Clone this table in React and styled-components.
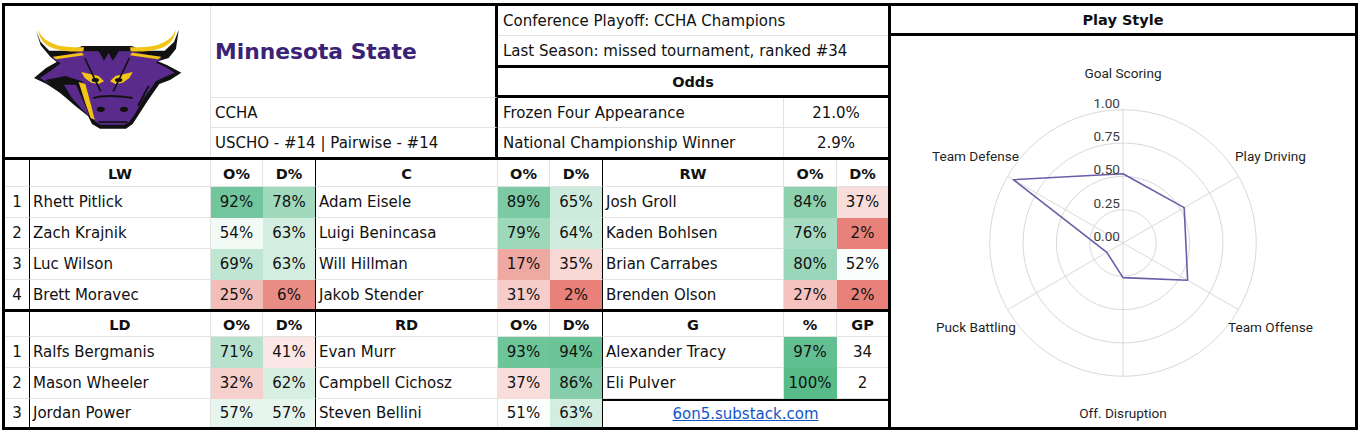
import React from 'react';
import styled, { createGlobalStyle } from 'styled-components';

const GlobalStyle = createGlobalStyle`
  html, body {
    margin: 0;
    padding: 0;
    background: #fff;
  }
  body {
    font-family: "DejaVu Sans", "Open Sans", sans-serif;
    color: #111;
  }
  * {
    box-sizing: border-box;
  }
`;

const GRID = '#e2e2e2';
const COLS = '25px 181px 52px 53px 182px 52px 53px 181px 53px 51px';
const PURPLE = '#5a2b8c';
const GOLD = '#f3c316';

// sheets style colour scale: red -> white -> green
const heat = (v) => {
  if (v === undefined) return '#fff';
  const lerp = (a, b, t) => Math.round(a + (b - a) * t);
  const [c, t] = v >= 50 ? [[87, 187, 138], (v - 50) / 50] : [[230, 124, 115], (50 - v) / 50];
  return `rgb(${lerp(255, c[0], t)}, ${lerp(255, c[1], t)}, ${lerp(255, c[2], t)})`;
};

const Page = styled.div`
  padding: 3px 0 0 2px;
`;

const Frame = styled.div`
  display: flex;
  width: fit-content;
  border: 3px solid #000;
`;

const Sheet = styled.div`
  display: flex;
  flex-direction: column;
  width: 883px;
`;

const Section = styled.div`
  display: grid;
  grid-template-columns: ${COLS};
  grid-template-rows: ${(p) => p.$rows};
  border-bottom: ${(p) => (p.$last ? 'none' : '3px solid #000')};
`;

const Cell = styled.div`
  display: flex;
  align-items: center;
  min-width: 0;
  overflow: hidden;
  white-space: nowrap;
  font-size: 15px;
  border-right: 1px solid ${(p) => (p.$sep ? '#000' : GRID)};
  border-bottom: 1px solid ${GRID};
  ${(p) => p.$end && 'border-right: none;'}
  ${(p) => p.$bottom && 'border-bottom: none;'}
`;

const RankCell = styled(Cell)`
  justify-content: center;
`;

const NameCell = styled(Cell)`
  padding-left: 3px;
`;

const HeadCell = styled(Cell)`
  justify-content: center;
  font-weight: bold;
  font-size: 14.5px;
  padding-top: 2px;
`;

const PctCell = styled(Cell)`
  justify-content: center;
  background: ${(p) => heat(p.$v)};
  ${(p) => p.$v !== undefined && `border-bottom-color: transparent;`}
  ${(p) => p.$v !== undefined && !p.$sep && `border-right-color: transparent;`}
`;

const LinkCell = styled(Cell)`
  grid-column: 8 / 11;
  justify-content: center;
  border-top: 2px solid #000;
  border-right: none;
  border-bottom: none;

  a {
    color: #1155cc;
    text-decoration: underline;
  }
`;

/* top block */
const LogoCell = styled(Cell)`
  grid-column: 1 / 3;
  grid-row: 1 / 6;
  justify-content: center;
  padding: 1px 1px 0 0;
  border-bottom: none;
`;

const TeamName = styled(Cell)`
  grid-column: 3 / 6;
  grid-row: 1 / 4;
  padding: 0 0 1px 4px;
  border-right: 3px solid #000;
  font-size: 21.8px;
  font-weight: bold;
  color: #3a2276;
`;

const InfoCell = styled(Cell)`
  grid-column: 3 / 6;
  grid-row: ${(p) => p.$row};
  padding-left: 4px;
  border-right: 3px solid #000;
`;

const NoteCell = styled(Cell)`
  grid-column: 6 / 11;
  grid-row: ${(p) => p.$row};
  padding-left: 5px;
  border-right: none;
  ${(p) => p.$thick && 'border-bottom: 3px solid #000;'}
`;

const OddsHead = styled(Cell)`
  grid-column: 6 / 11;
  grid-row: 3;
  justify-content: center;
  font-weight: bold;
  font-size: 14.5px;
  border-right: none;
  border-bottom: 3px solid #000;
`;

const OddsLabel = styled(Cell)`
  grid-column: 6 / 9;
  grid-row: ${(p) => p.$row};
  padding-left: 5px;
`;

const OddsValue = styled(Cell)`
  grid-column: 9 / 11;
  grid-row: ${(p) => p.$row};
  justify-content: center;
  border-right: none;
`;

/* play style panel */
const Panel = styled.div`
  width: 467px;
  border-left: 3px solid #000;
  display: flex;
  flex-direction: column;
`;

const PanelHead = styled.div`
  height: 30px;
  border-bottom: 3px solid #000;
  display: flex;
  align-items: center;
  justify-content: center;
  font-weight: bold;
  font-size: 14.5px;
  padding-top: 1px;
`;

const PanelBody = styled.div`
  flex: 1;
  svg {
    display: block;
  }
`;

const AxisLabel = styled.text`
  font-family: Roboto, "Noto Sans", sans-serif;
  font-size: 13.6px;
  fill: #1f1f1f;
`;

const TickLabel = styled(AxisLabel)`
  fill: #3c3c3c;
`;

const forwards = [
  { n: 1, lw: ['Rhett Pitlick', 92, 78], c: ['Adam Eisele', 89, 65], rw: ['Josh Groll', 84, 37] },
  { n: 2, lw: ['Zach Krajnik', 54, 63], c: ['Luigi Benincasa', 79, 64], rw: ['Kaden Bohlsen', 76, 2] },
  { n: 3, lw: ['Luc Wilson', 69, 63], c: ['Will Hillman', 17, 35], rw: ['Brian Carrabes', 80, 52] },
  { n: 4, lw: ['Brett Moravec', 25, 6], c: ['Jakob Stender', 31, 2], rw: ['Brenden Olson', 27, 2] },
];

const defense = [
  { n: 1, ld: ['Ralfs Bergmanis', 71, 41], rd: ['Evan Murr', 93, 94], g: ['Alexander Tracy', 97, 34] },
  { n: 2, ld: ['Mason Wheeler', 32, 62], rd: ['Campbell Cichosz', 37, 86], g: ['Eli Pulver', 100, 2] },
  { n: 3, ld: ['Jordan Power', 57, 57], rd: ['Steven Bellini', 51, 63] },
];

const CX = 1123;
const CY = 243;
const R = 133.3;

const axes = [
  { name: 'Goal Scoring', v: 0.52, x: 1123, y: 78, anchor: 'middle' },
  { name: 'Play Driving', v: 0.53, x: 1235, y: 161, anchor: 'start' },
  { name: 'Team Offense', v: 0.56, x: 1228, y: 332, anchor: 'start' },
  { name: 'Off. Disruption', v: 0.26, x: 1123, y: 418, anchor: 'middle' },
  { name: 'Puck Battling', v: 0.14, x: 1016, y: 332, anchor: 'end' },
  { name: 'Team Defense', v: 0.95, x: 1019, y: 161, anchor: 'end' },
];

const pt = (i, r) => {
  const a = ((-90 + 60 * i) * Math.PI) / 180;
  return [CX + r * Math.cos(a), CY + r * Math.sin(a)];
};

// bull head mascot, drawn on a 450 x 336 grid
function Logo() {
  return (
    <svg width="150" height="112" viewBox="0 0 450 336">
      {/* silhouette */}
      <path
        d="M12,14 L26,58 L55,92 L74,108 L42,126 L6,156 L44,174 L86,202 L130,240 L168,270 L180,294 L204,308 L282,308 L302,294 L320,266 L347,224 L382,174 L414,162 L448,140 L406,118 L378,106 L410,96 L432,68 L440,12 L426,48 L398,74 L330,74 L300,60 L150,60 L120,74 L52,74 L26,48 Z"
        fill="#111"
      />
      {/* face */}
      <path
        d="M60,96 L150,76 L300,76 L390,96 L372,110 L402,124 L428,140 L396,154 L372,166 L336,216 L310,262 L292,288 L276,296 L206,296 L188,285 L178,262 L140,228 L96,196 L50,172 L24,156 L56,134 L86,112 Z"
        fill={PURPLE}
      />
      {/* horns */}
      <path d="M18,10 C26,30 40,46 72,56 C100,64 130,64 156,64 L154,76 C124,78 96,76 68,68 C40,60 22,42 18,10 Z" fill={GOLD} />
      <path d="M432,10 C424,30 410,46 378,56 C350,64 320,64 294,64 L296,76 C326,78 354,76 382,68 C410,60 428,42 432,10 Z" fill={GOLD} />
      {/* forelock */}
      <path d="M188,62 L266,62 L256,84 L242,104 L230,80 L216,104 L204,82 Z" fill="#111" />
      {/* shaded left cheek */}
      <path d="M40,162 L100,150 L150,166 L176,232 L186,286 L170,266 L130,234 L86,202 Z" fill="#111" />
      <path d="M96,176 L132,176 L160,240 L172,270 L150,250 L118,214 Z" fill={PURPLE} />
      {/* gold accents */}
      <path d="M62,92 L150,80 L156,88 L72,100 Z" fill={GOLD} />
      <path d="M388,92 L300,80 L294,88 L378,100 Z" fill={GOLD} />
      <path d="M140,168 L160,174 L178,240 L188,282 L176,276 L160,232 Z" fill={GOLD} />
      <path d="M148,138 L200,150 L216,166 L200,174 L178,170 L158,156 Z" fill={GOLD} />
      <path d="M302,138 L250,150 L234,166 L250,174 L272,170 L292,156 Z" fill={GOLD} />
      {/* eyes */}
      <ellipse cx="190" cy="162" rx="11" ry="6" fill="#111" />
      <ellipse cx="260" cy="162" rx="11" ry="6" fill="#111" />
      {/* brow and snout lines */}
      <path d="M158,96 L206,196 M292,96 L244,196" fill="none" stroke="#111" strokeWidth="5" />
      <path d="M350,180 L318,240" fill="none" stroke="#111" strokeWidth="6" />
      <path d="M184,216 Q226,204 302,216" fill="none" stroke="#111" strokeWidth="6" />
      <ellipse cx="206" cy="250" rx="12" ry="8" fill="#111" />
      <ellipse cx="276" cy="250" rx="12" ry="8" fill="#111" />
      <path d="M200,288 L286,288" stroke="#111" strokeWidth="5" />
    </svg>
  );
}

function RadarChart() {
  const poly = axes.map((a, i) => pt(i, a.v * R).join(',')).join(' ');
  return (
    <svg width="464" height="391" viewBox="891 36 464 391">
      {[0.25, 0.5, 0.75, 1].map((v) => (
        <circle key={v} cx={CX} cy={CY} r={v * R} fill="none" stroke="#d9d9d9" strokeWidth="1" />
      ))}
      {axes.map((a, i) => {
        const [x, y] = pt(i, R);
        return <line key={a.name} x1={CX} y1={CY} x2={x} y2={y} stroke="#d9d9d9" strokeWidth="1" />;
      })}
      <polygon points={poly} fill="none" stroke="#6b5ca8" strokeWidth="1.6" strokeLinejoin="round" />
      {[0, 0.25, 0.5, 0.75, 1].map((v) => (
        <TickLabel key={v} x={1120} y={CY - v * R - 2} textAnchor="end">
          {v.toFixed(2)}
        </TickLabel>
      ))}
      {axes.map((a) => (
        <AxisLabel key={a.name} x={a.x} y={a.y} textAnchor={a.anchor}>
          {a.name}
        </AxisLabel>
      ))}
    </svg>
  );
}

function PlayerCells({ p, last, sepEnd }) {
  return (
    <>
      <NameCell $bottom={last}>{p[0]}</NameCell>
      <PctCell $v={p[1]} $bottom={last}>{p[1]}%</PctCell>
      <PctCell $v={p[2]} $bottom={last} $sep={sepEnd} $end={!sepEnd}>{p[2]}%</PctCell>
    </>
  );
}

export default function App() {
  return (
    <Page>
      <GlobalStyle />
      <Frame>
        <Sheet>
          <Section $rows="30px 32px 30px 30px 29px">
            <LogoCell>
              <Logo />
            </LogoCell>
            <TeamName>Minnesota State</TeamName>
            <InfoCell $row={4}>CCHA</InfoCell>
            <InfoCell $row={5} $bottom>USCHO - #14 | Pairwise - #14</InfoCell>
            <NoteCell $row={1}>Conference Playoff: CCHA Champions</NoteCell>
            <NoteCell $row={2} $thick>Last Season: missed tournament, ranked #34</NoteCell>
            <OddsHead>Odds</OddsHead>
            <OddsLabel $row={4}>Frozen Four Appearance</OddsLabel>
            <OddsValue $row={4}>21.0%</OddsValue>
            <OddsLabel $row={5} $bottom>National Championship Winner</OddsLabel>
            <OddsValue $row={5} $bottom>2.9%</OddsValue>
          </Section>

          <Section $rows="27px 31px 31px 31px 29px">
            <HeadCell $sep />
            <HeadCell>LW</HeadCell>
            <HeadCell>O%</HeadCell>
            <HeadCell $sep>D%</HeadCell>
            <HeadCell>C</HeadCell>
            <HeadCell>O%</HeadCell>
            <HeadCell $sep>D%</HeadCell>
            <HeadCell>RW</HeadCell>
            <HeadCell>O%</HeadCell>
            <HeadCell $end>D%</HeadCell>
            {forwards.map((row, i) => {
              const last = i === forwards.length - 1;
              return (
                <React.Fragment key={row.n}>
                  <RankCell $sep $bottom={last}>{row.n}</RankCell>
                  <PlayerCells p={row.lw} last={last} sepEnd />
                  <PlayerCells p={row.c} last={last} sepEnd />
                  <PlayerCells p={row.rw} last={last} />
                </React.Fragment>
              );
            })}
          </Section>

          <Section $rows="25px 31px 31px 28px" $last>
            <HeadCell $sep />
            <HeadCell>LD</HeadCell>
            <HeadCell>O%</HeadCell>
            <HeadCell $sep>D%</HeadCell>
            <HeadCell>RD</HeadCell>
            <HeadCell>O%</HeadCell>
            <HeadCell $sep>D%</HeadCell>
            <HeadCell>G</HeadCell>
            <HeadCell>%</HeadCell>
            <HeadCell $end>GP</HeadCell>
            {defense.map((row, i) => {
              const last = i === defense.length - 1;
              return (
                <React.Fragment key={row.n}>
                  <RankCell $sep $bottom={last}>{row.n}</RankCell>
                  <PlayerCells p={row.ld} last={last} sepEnd />
                  <PlayerCells p={row.rd} last={last} sepEnd />
                  {row.g ? (
                    <>
                      <NameCell>{row.g[0]}</NameCell>
                      <PctCell $v={row.g[1]}>{row.g[1]}%</PctCell>
                      <PctCell $end>{row.g[2]}</PctCell>
                    </>
                  ) : (
                    <LinkCell>
                      <a href="#">6on5.substack.com</a>
                    </LinkCell>
                  )}
                </React.Fragment>
              );
            })}
          </Section>
        </Sheet>

        <Panel>
          <PanelHead>Play Style</PanelHead>
          <PanelBody>
            <RadarChart />
          </PanelBody>
        </Panel>
      </Frame>
    </Page>
  );
}
